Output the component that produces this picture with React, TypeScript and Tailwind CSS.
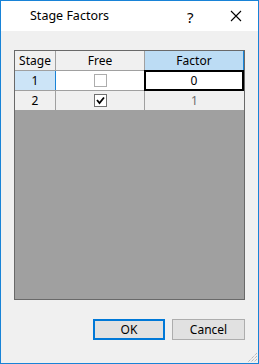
import React from 'react';

const font = "font-['Segoe_UI','Noto_Sans','Open_Sans',sans-serif]";

const CheckBox: React.FC<{ checked?: boolean }> = ({ checked }) => (
  <div
    className={`w-[13px] h-[13px] border bg-white flex items-center justify-center ${
      checked ? 'border-[#6f6f6f]' : 'border-[#adadad]'
    }`}
  >
    {checked && (
      <svg width="9" height="9" viewBox="0 0 9 9">
        <path d="M1 4 L3.5 7 L8 1.5" fill="none" stroke="#000" strokeWidth="1.8" />
      </svg>
    )}
  </div>
);

const App: React.FC = () => {
  return (
    <div className={`w-[259px] h-[364px] border border-[#1883d7] flex flex-col bg-[#f0f0f0] ${font} text-[12px] text-black`}>
      {/* title bar */}
      <div className="h-[30px] bg-white flex items-center relative">
        <span className="ml-[29px] text-[12.5px]">Stage Factors</span>
        <span className="absolute left-[186px] top-[5px] text-[15px]">?</span>
        <svg className="absolute left-[229px] top-[9px]" width="12" height="12" viewBox="0 0 12 12">
          <path d="M1 1 L11 11 M11 1 L1 11" stroke="#000" strokeWidth="1.1" />
        </svg>
      </div>

      <div className="flex-1 flex flex-col px-[13px] pt-[19px] relative">
        {/* grid */}
        <div className="h-[250px] border border-[#696969] bg-[#a0a0a0] flex flex-col">
          {/* header */}
          <div className="flex h-[20px] border-b border-[#a0a0a0]">
            <div className="w-[41px] bg-[#f0f0f0] border-r border-[#a0a0a0] flex items-center justify-center">Stage</div>
            <div className="w-[89px] bg-[#f0f0f0] border-r border-[#a0a0a0] flex items-center justify-center">Free</div>
            <div className="flex-1 bg-[#bcdcf4] border-r border-[#1883d7] flex items-center justify-center">Factor</div>
          </div>
          {/* row 1 */}
          <div className="flex h-[20px] border-b border-[#a0a0a0]">
            <div className="w-[41px] bg-[#cce4f7] border-r border-[#1883d7] flex items-center justify-center">1</div>
            <div className="w-[89px] bg-white border-r border-[#a0a0a0] flex items-center justify-center">
              <CheckBox />
            </div>
            <div className="flex-1 bg-white border-2 border-black -mt-[1px] -ml-[1px] h-[21px] flex items-center justify-center">0</div>
          </div>
          {/* row 2 */}
          <div className="flex h-[20px] border-b border-[#a0a0a0]">
            <div className="w-[41px] bg-[#f0f0f0] border-r border-[#a0a0a0] flex items-center justify-center">2</div>
            <div className="w-[89px] bg-[#f0f0f0] border-r border-[#a0a0a0] flex items-center justify-center">
              <CheckBox checked />
            </div>
            <div className="flex-1 bg-[#f0f0f0] flex items-center justify-center text-[#6d6d6d]">1</div>
          </div>
        </div>

        {/* buttons */}
        <div className="flex justify-end gap-[7px] mt-[19px]">
          <button className="w-[72px] h-[21px] border-2 border-[#0078d7] bg-[#e1e1e1] flex items-center justify-center">OK</button>
          <button className="w-[73px] h-[21px] border border-[#adadad] bg-[#e1e1e1] flex items-center justify-center">Cancel</button>
        </div>

        {/* resize grip */}
        <svg className="absolute right-0 bottom-0" width="12" height="12" viewBox="0 0 12 12">
          <path d="M11 2 L2 11 M11 5 L5 11 M11 8 L8 11" stroke="#a0a0a0" strokeWidth="1" strokeDasharray="1 1" />
        </svg>
      </div>
    </div>
  );
};

export default App;
